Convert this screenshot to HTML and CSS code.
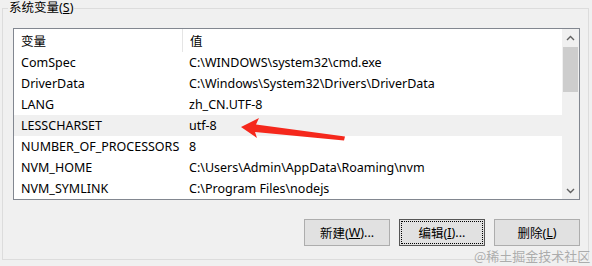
FILE: index.html
```html
<!DOCTYPE html>
<html lang="zh">
<head>
<meta charset="utf-8">
<link rel="stylesheet" href="styles.css">
</head>
<body>
<fieldset class="group">
  <legend class="group-label">系统变量(<u>S</u>)</legend>
  <div class="listbox">
    <div class="list-main">
      <div class="row head"><span class="c1">变量</span><span class="c2">值</span></div>
      <div class="row"><span class="c1">ComSpec</span><span class="c2">C:\WINDOWS\system32\cmd.exe</span></div>
      <div class="row"><span class="c1">DriverData</span><span class="c2">C:\Windows\System32\Drivers\DriverData</span></div>
      <div class="row"><span class="c1">LANG</span><span class="c2">zh_CN.UTF-8</span></div>
      <div class="row hl"><span class="c1">LESSCHARSET</span><span class="c2">utf-8</span></div>
      <div class="row"><span class="c1">NUMBER_OF_PROCESSORS</span><span class="c2">8</span></div>
      <div class="row"><span class="c1">NVM_HOME</span><span class="c2">C:\Users\Admin\AppData\Roaming\nvm</span></div>
      <div class="row"><span class="c1">NVM_SYMLINK</span><span class="c2">C:\Program Files\nodejs</span></div>
    </div>
    <div class="scrollbar">
      <div class="sb-btn"><svg width="9" height="6" viewBox="0 0 9 6"><path d="M1 5 L4.5 1.5 L8 5" fill="none" stroke="#606060" stroke-width="1.4"/></svg></div>
      <div class="sb-thumb"></div>
      <div class="sb-track"></div>
      <div class="sb-btn"><svg width="9" height="6" viewBox="0 0 9 6"><path d="M1 1 L4.5 4.5 L8 1" fill="none" stroke="#606060" stroke-width="1.4"/></svg></div>
    </div>
  </div>
  <div class="buttons">
    <button class="btn">新建(<u>W</u>)...</button>
    <button class="btn focus"><span class="focus-ring">编辑(<u>I</u>)...</span></button>
    <button class="btn">删除(<u>L</u>)</button>
  </div>
</fieldset>
<svg class="arrow" width="592" height="266" viewBox="0 0 592 266">
  <polygon points="241,127 259,118 256,124.5 345,136.5 344,140.5 255,132 257,138" fill="#f5281c"/>
</svg>
<div class="watermark">@稀土掘金技术社区</div>
</body>
</html>
```
FILE: styles.css
```css
html, body {
  margin: 0;
  padding: 0;
  background: #f0f0f0;
  width: 592px;
  height: 266px;
  overflow: hidden;
  font-family: "Noto Sans", "Noto Sans CJK SC", sans-serif;
  font-size: 12px;
  color: #000;
}
.group {
  margin: 0 0 0 2px;
  width: 567px;
  height: 231px;
  border: 1px solid #dcdcdc;
  padding: 12px 8px 15px 10px;
  box-sizing: content-box;
  display: flex;
  flex-direction: column;
}
.group-label {
  padding: 0 1px;
  margin-left: -5px;
  line-height: 16px;
  font-size: 12.5px;
}
u { text-decoration: underline; text-underline-offset: 1px; }
.listbox {
  display: flex;
  border: 1px solid #828790;
  background: #fff;
  height: 173px;
}
.list-main {
  flex: 1;
  display: flex;
  flex-direction: column;
  font-size: 12.5px;
}
.row {
  display: flex;
  height: 21px;
  align-items: center;
  line-height: 16px;
  padding-top: 1px;
  box-sizing: border-box;
}
.row.head { height: 23px; padding-top: 0; }
.row.hl { background: #f0f0f0; }
.c1 {
  width: 161px;
  padding-left: 7px;
  flex: none;
  white-space: nowrap;
}
.head .c1 {
  border-right: 1px solid #e5e5e5;
  height: 23px;
  line-height: 25px;
}
.head .c2 { padding-top: 2px; }
.c2 {
  padding-left: 7px;
  white-space: nowrap;
}
.scrollbar {
  width: 17px;
  display: flex;
  flex-direction: column;
  background: #f0f0f0;
}
.sb-btn {
  height: 17px;
  display: flex;
  align-items: center;
  justify-content: center;
}
.sb-thumb {
  height: 45px;
  margin: 1px 1px 0 1px;
  background: #cdcdcd;
}
.sb-track { flex: 1; }
.buttons {
  display: flex;
  justify-content: flex-end;
  gap: 9px;
  margin-top: 19px;
}
.btn {
  width: 86px;
  height: 27px;
  background: #e1e1e1;
  border: 1px solid #adadad;
  font: inherit;
  font-size: 12.5px;
  color: #000;
  padding: 0;
  display: flex;
  align-items: center;
  justify-content: center;
}
.btn.focus {
  border-color: #555;
  padding: 2px;
}
.focus-ring {
  flex: 1;
  align-self: stretch;
  display: flex;
  align-items: center;
  justify-content: center;
  outline: 1px dotted #000;
}
.arrow {
  position: absolute;
  left: 0;
  top: 0;
  pointer-events: none;
}
.watermark {
  position: absolute;
  left: 474px;
  top: 248px;
  font-family: "Noto Sans CJK SC", sans-serif;
  font-size: 13px;
  line-height: 16px;
  color: rgba(150,150,150,0.75);
}
```
